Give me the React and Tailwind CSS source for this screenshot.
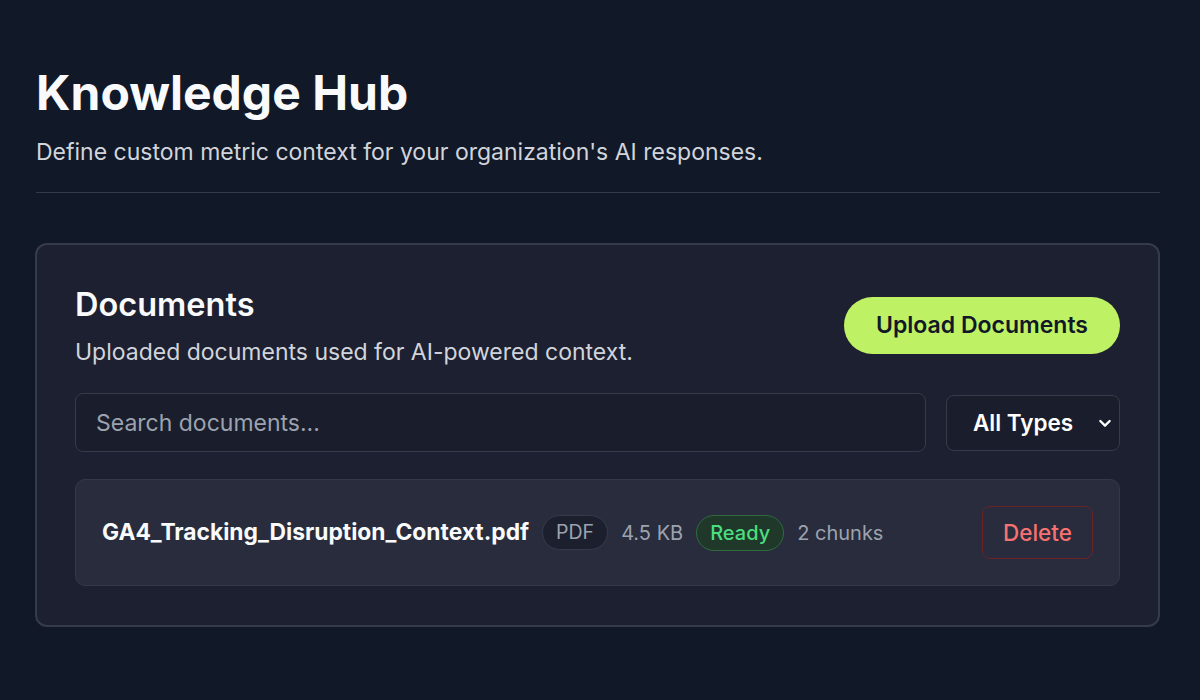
import React, { useState } from 'react';

const docs = [
  { id: 1, name: 'GA4_Tracking_Disruption_Context.pdf', type: 'PDF', size: '4.5 KB', status: 'Ready', chunks: 2 },
];

export default function App() {
  const [query, setQuery] = useState('');
  const [type, setType] = useState('all');

  return (
    <div className="min-h-screen bg-[#111827] pl-[35px] pr-10 pt-16 pb-10 font-['Inter',sans-serif] text-white">
      {/* Header */}
      <header className="ml-px pb-6 border-b border-[#343a4a]">
        <h1 className="text-[48px] font-bold leading-[58px] text-[#f9fafb]">Knowledge Hub</h1>
        <p className="mt-[14px] text-[23px] leading-8 text-[#d1d5db]">
          Define custom metric context for your organization's AI responses.
        </p>
      </header>

      {/* Documents card */}
      <section className="mt-[50px] rounded-xl border-2 border-[#363b4c] bg-[#1d2030] px-[38px] pt-10 pb-[39px]">
        <div className="flex items-start justify-between">
          <div>
            <h2 className="text-[32.5px] font-semibold leading-10 text-[#f9fafb]">Documents</h2>
            <p className="mt-[11px] text-[23px] leading-8 text-[#d1d5db]">Uploaded documents used for AI-powered context.</p>
          </div>
          <button className="mt-3 h-[57px] rounded-full bg-[#bef264] px-8 text-[23px] font-semibold text-[#111827]">
            Upload Documents
          </button>
        </div>

        <div className="mt-[25px] flex items-center gap-5">
          <input
            value={query}
            onChange={(e) => setQuery(e.target.value)}
            placeholder="Search documents..."
            className="h-[59px] flex-1 rounded-lg border border-[#363b4c] bg-[#1a1d2b] px-5 text-[23px] text-white placeholder-[#9ca3af] outline-none"
          />
          <div className="relative">
            <select
              value={type}
              onChange={(e) => setType(e.target.value)}
              className="h-[56px] w-[174px] appearance-none rounded-lg border border-[#363b4c] bg-[#1a1d2b] pl-[26px] text-[22.5px] font-semibold text-white outline-none"
            >
              <option value="all">All Types</option>
              <option value="pdf">PDF</option>
              <option value="txt">TXT</option>
            </select>
            <svg className="pointer-events-none absolute right-[7px] top-1/2 -translate-y-1/2" width="16" height="16" viewBox="0 0 24 24" fill="none" stroke="white" strokeWidth="3.5" strokeLinecap="round" strokeLinejoin="round">
              <path d="M5 9l7 7 7-7" />
            </svg>
          </div>
        </div>

        <div className="mt-[27px] flex flex-col gap-3">
          {docs.map((d) => (
            <div key={d.id} className="flex h-[107px] items-center justify-between rounded-[10px] border border-[#33384a] bg-[#282c3c] px-[26px]">
              <div className="flex items-center gap-[13px]">
                <span className="text-[22.8px] font-bold text-[#f9fafb]">{d.name}</span>
                <span className="rounded-full border border-[#363b4c] bg-[#1c1f2e] px-[13px] py-[2px] text-[19.5px] text-[#9ca3af]">{d.type}</span>
                <span className="text-[20px] text-[#9ca3af]">{d.size}</span>
                <span className="rounded-full border border-[#2f6b3f] bg-[#1f3829] px-[13px] py-[2px] text-[20px] font-medium text-[#4ade80]">{d.status}</span>
                <span className="text-[20px] text-[#9ca3af]">{d.chunks} chunks</span>
              </div>
              <button className="h-[53px] w-[111px] rounded-lg border border-[#6b2328] text-[22.5px] font-medium text-[#f87171]">
                Delete
              </button>
            </div>
          ))}
        </div>
      </section>
    </div>
  );
}
